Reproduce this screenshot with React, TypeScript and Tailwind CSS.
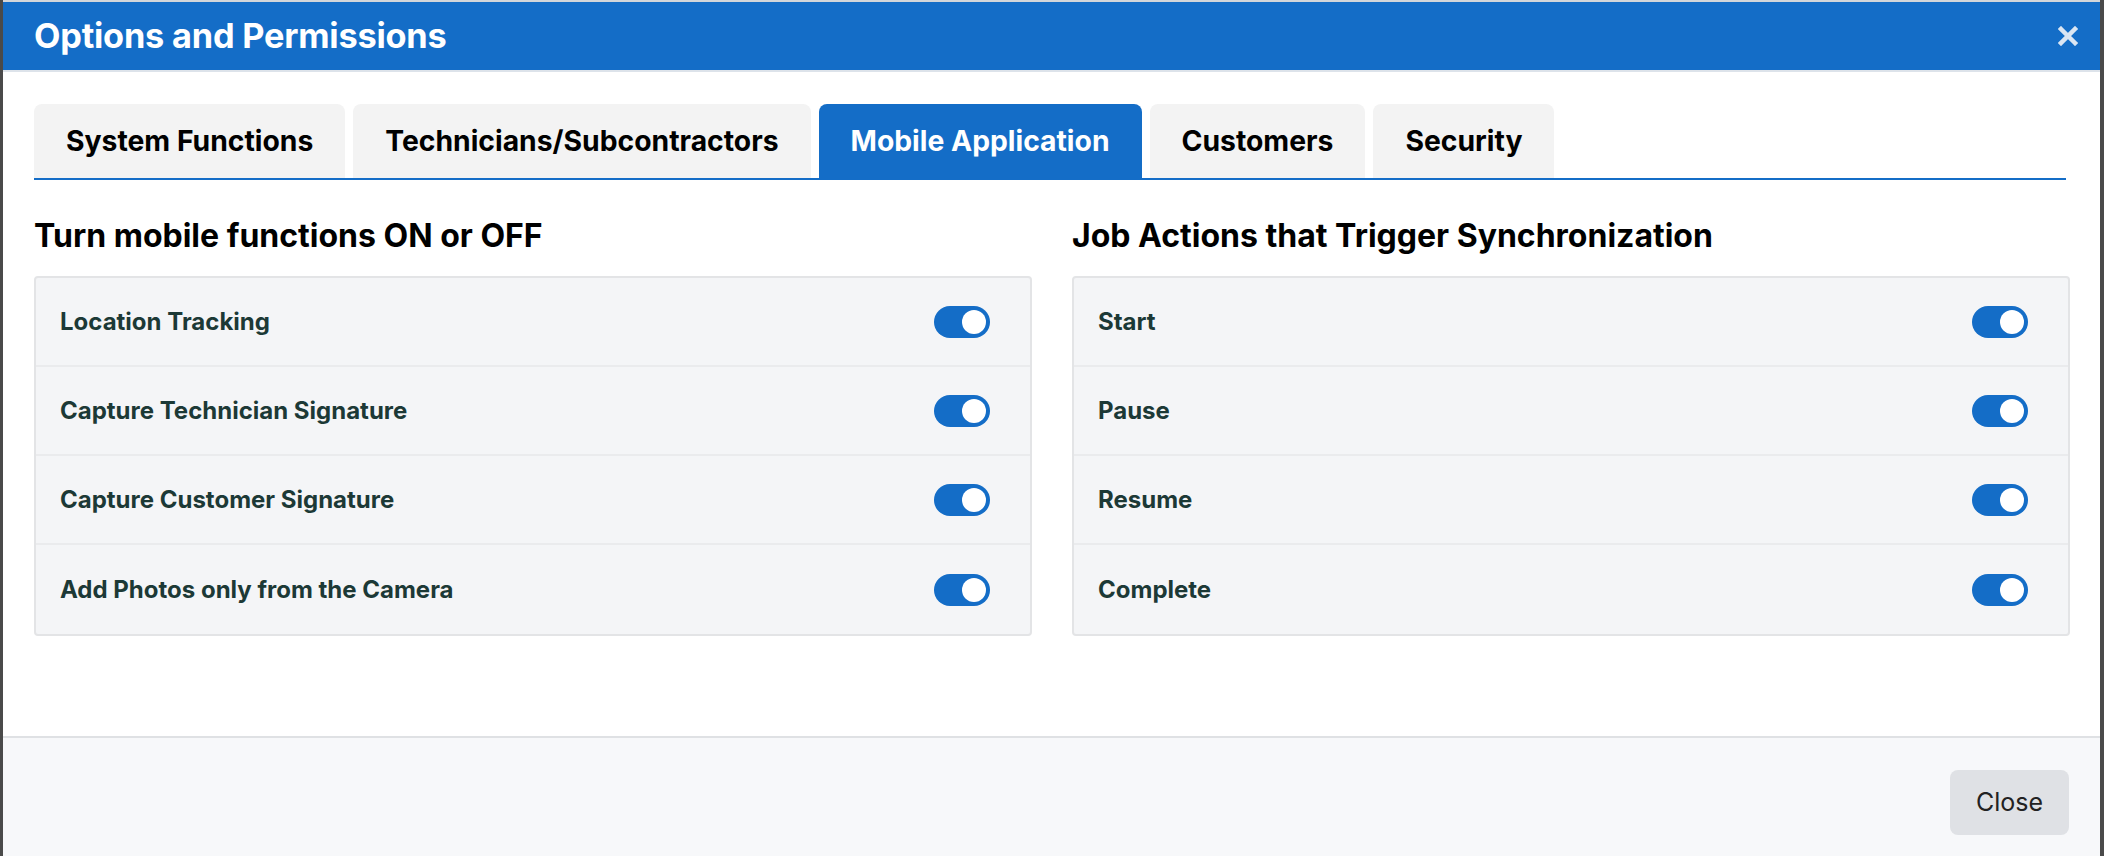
import React from "react";

const left = [
  "Location Tracking",
  "Capture Technician Signature",
  "Capture Customer Signature",
  "Add Photos only from the Camera",
];
const right = ["Start", "Pause", "Resume", "Complete"];
const tabs = [
  "System Functions",
  "Technicians/Subcontractors",
  "Mobile Application",
  "Customers",
  "Security",
];

function Toggle() {
  return (
    <div className="w-[56px] h-[32px] rounded-full bg-[#146dc7] flex items-center justify-end p-[4px]">
      <div className="w-[24px] h-[24px] rounded-full bg-white" />
    </div>
  );
}

function Card({ items }: { items: string[] }) {
  return (
    <div className="border-2 border-[#e3e4e6] rounded-[4px] bg-[#f4f5f7] flex flex-col">
      {items.map((t, i) => (
        <div
          key={t}
          className={
            "h-[89px] flex items-center justify-between pl-[24px] pr-[40px] " +
            (i < items.length - 1 ? "border-b-2 border-[#eaebed]" : "")
          }
        >
          <span className="text-[24px] font-bold text-[#1c3936]">{t}</span>
          <Toggle />
        </div>
      ))}
    </div>
  );
}

export default function App() {
  return (
    <div
      className="w-[2104px] h-[856px] bg-[#4a4a4a] overflow-hidden"
      style={{ fontFamily: "Inter, 'Noto Sans', sans-serif" }}
    >
      <div className="ml-[3px] w-[2097px] h-[856px] bg-white flex flex-col border-t-2 border-[#d3d6da]">
        <div className="h-[68px] shrink-0 bg-[#146dc7] flex items-center justify-between pl-[31px] pr-[22px]">
          <span className="text-[34.3px] font-bold text-white tracking-[-0.2px]">Options and Permissions</span>
          <svg width="20" height="20" viewBox="0 0 20 20">
            <path d="M3 3 L17 17 M17 3 L3 17" stroke="#dbe6f3" strokeWidth="4.5" strokeLinecap="square" />
          </svg>
        </div>
        <div className="h-[2px] shrink-0 bg-[#dde3ea]" />
        <div className="h-[664px] shrink-0 pl-[31px] pr-[30px] flex flex-col">
          <div className="mt-[32px] mr-[4px] flex gap-[8px] border-b-2 border-[#146dc7]">
            {tabs.map((t) => (
              <div
                key={t}
                className={
                  "h-[74px] px-[32px] flex items-center rounded-t-[8px] text-[28.3px] font-bold " +
                  (t === "Mobile Application" ? "bg-[#146dc7] text-white" : "bg-[#f3f3f3] text-black")
                }
              >
                {t}
              </div>
            ))}
          </div>
          <div className="grid grid-cols-2 gap-[40px] mt-[36px]">
            <div className="flex flex-col">
              <h2 className="text-[32px] font-bold text-black leading-[40px] mb-[20px]">
                Turn mobile functions ON or OFF
              </h2>
              <Card items={left} />
            </div>
            <div className="flex flex-col">
              <h2 className="text-[32px] font-bold text-black leading-[40px] mb-[20px]">
                Job Actions that Trigger Synchronization
              </h2>
              <Card items={right} />
            </div>
          </div>
        </div>
        <div className="flex-1 border-t-2 border-[#dfe1e4] bg-[#f7f8fa] flex justify-end items-start pt-[32px] pr-[31px]">
          <button className="w-[119px] h-[65px] rounded-[8px] bg-[#dfe1e5] text-[25px] text-[#222] font-normal">
            Close
          </button>
        </div>
      </div>
    </div>
  );
}
